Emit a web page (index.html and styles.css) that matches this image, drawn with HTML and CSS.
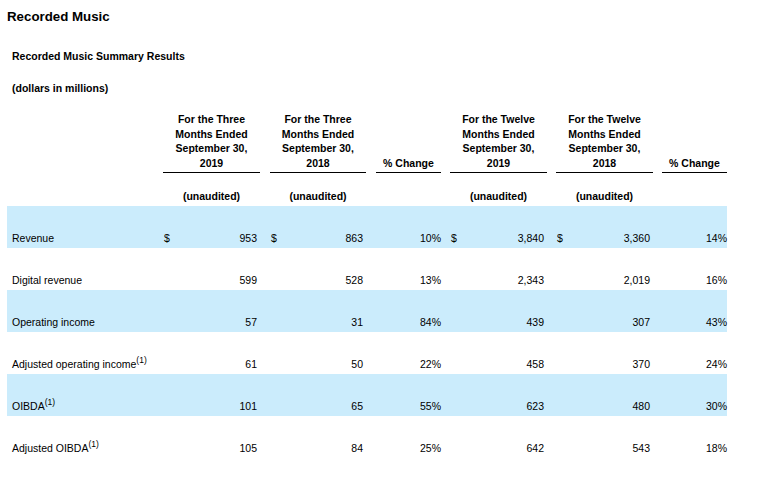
FILE: index.html
```html
<!DOCTYPE html>
<html lang="en">
<head>
<meta charset="utf-8">
<title>Recorded Music</title>
<link rel="stylesheet" href="styles.css">
</head>
<body>
<div class="page">
  <h1 class="title">Recorded Music</h1>
  <p class="subtitle">Recorded Music Summary Results</p>
  <p class="subtitle note">(dollars in millions)</p>
  <table class="results">
    <colgroup>
      <col class="c-label">
      <col class="c-num">
      <col class="c-sp">
      <col class="c-num2">
      <col class="c-sp">
      <col class="c-pct">
      <col class="c-sp9">
      <col class="c-num">
      <col class="c-sp9">
      <col class="c-num">
      <col class="c-sp9">
      <col class="c-pct">
    </colgroup>
    <thead>
      <tr class="head">
        <th></th>
        <th class="hcol">For the Three<br>Months Ended<br>September 30,<br>2019</th>
        <th></th>
        <th class="hcol">For the Three<br>Months Ended<br>September 30,<br>2018</th>
        <th></th>
        <th class="hcol">% Change</th>
        <th></th>
        <th class="hcol">For the Twelve<br>Months Ended<br>September 30,<br>2019</th>
        <th></th>
        <th class="hcol">For the Twelve<br>Months Ended<br>September 30,<br>2018</th>
        <th></th>
        <th class="hcol">% Change</th>
      </tr>
      <tr class="sub">
        <th></th>
        <th>(unaudited)</th>
        <th></th>
        <th>(unaudited)</th>
        <th></th>
        <th></th>
        <th></th>
        <th>(unaudited)</th>
        <th></th>
        <th>(unaudited)</th>
        <th></th>
        <th></th>
      </tr>
    </thead>
    <tbody>
      <tr class="shade">
        <td class="label">Revenue</td>
        <td class="num"><span class="cur">$</span>953</td>
        <td></td>
        <td class="num"><span class="cur">$</span>863</td>
        <td></td>
        <td class="pct">10%</td>
        <td></td>
        <td class="num"><span class="cur">$</span>3,840</td>
        <td></td>
        <td class="num"><span class="cur">$</span>3,360</td>
        <td></td>
        <td class="pct">14%</td>
      </tr>
      <tr>
        <td class="label">Digital revenue</td>
        <td class="num">599</td>
        <td></td>
        <td class="num">528</td>
        <td></td>
        <td class="pct">13%</td>
        <td></td>
        <td class="num">2,343</td>
        <td></td>
        <td class="num">2,019</td>
        <td></td>
        <td class="pct">16%</td>
      </tr>
      <tr class="shade">
        <td class="label">Operating income</td>
        <td class="num">57</td>
        <td></td>
        <td class="num">31</td>
        <td></td>
        <td class="pct">84%</td>
        <td></td>
        <td class="num">439</td>
        <td></td>
        <td class="num">307</td>
        <td></td>
        <td class="pct">43%</td>
      </tr>
      <tr>
        <td class="label">Adjusted operating income<sup>(1)</sup></td>
        <td class="num">61</td>
        <td></td>
        <td class="num">50</td>
        <td></td>
        <td class="pct">22%</td>
        <td></td>
        <td class="num">458</td>
        <td></td>
        <td class="num">370</td>
        <td></td>
        <td class="pct">24%</td>
      </tr>
      <tr class="shade">
        <td class="label">OIBDA<sup>(1)</sup></td>
        <td class="num">101</td>
        <td></td>
        <td class="num">65</td>
        <td></td>
        <td class="pct">55%</td>
        <td></td>
        <td class="num">623</td>
        <td></td>
        <td class="num">480</td>
        <td></td>
        <td class="pct">30%</td>
      </tr>
      <tr>
        <td class="label">Adjusted OIBDA<sup>(1)</sup></td>
        <td class="num">105</td>
        <td></td>
        <td class="num">84</td>
        <td></td>
        <td class="pct">25%</td>
        <td></td>
        <td class="num">642</td>
        <td></td>
        <td class="num">543</td>
        <td></td>
        <td class="pct">18%</td>
      </tr>
    </tbody>
  </table>
</div>
</body>
</html>
```

FILE: styles.css
```css
html, body {
  margin: 0;
  padding: 0;
  background: #ffffff;
}

body {
  font-family: "Liberation Sans", Arial, sans-serif;
  color: #000000;
  font-size: 10.5px;
}

.page {
  padding: 9px 7px 0 7px;
}

.title {
  margin: 0;
  font-size: 13.3px;
  line-height: 16px;
  font-weight: bold;
}

.subtitle {
  margin: 24px 0 0 5px;
  font-size: 10.5px;
  line-height: 14px;
  font-weight: bold;
}

.subtitle.note {
  margin-top: 18px;
}

.results {
  margin-top: 17px;
  border-collapse: collapse;
  table-layout: fixed;
  width: 720px;
  font-size: 10.5px;
}

.c-label { width: 156px; }
.c-num { width: 97px; }
.c-num2 { width: 96px; }
.c-sp { width: 10px; }
.c-sp9 { width: 9px; }
.c-pct { width: 65px; }

.results th,
.results td {
  padding: 0;
  vertical-align: bottom;
  line-height: 14px;
}

.results th {
  font-weight: bold;
  text-align: center;
}

.head th {
  line-height: 14.6px;
  padding-bottom: 2px;
}

.head th.hcol {
  border-bottom: 1px solid #000000;
}

.sub th {
  height: 33px;
  padding-bottom: 3px;
  box-sizing: border-box;
}

.results tbody td {
  height: 42px;
  padding-bottom: 3px;
  box-sizing: border-box;
}

.shade td {
  background: #cbecfc;
}

.results td.label {
  padding-left: 5px;
  white-space: nowrap;
}

.results td.num {
  text-align: right;
  padding-right: 3px;
}

.results td.pct {
  text-align: right;
}

.cur {
  float: left;
  padding-left: 1px;
}

sup {
  font-size: 8.5px;
  line-height: 0;
  vertical-align: 5px;
}
```
